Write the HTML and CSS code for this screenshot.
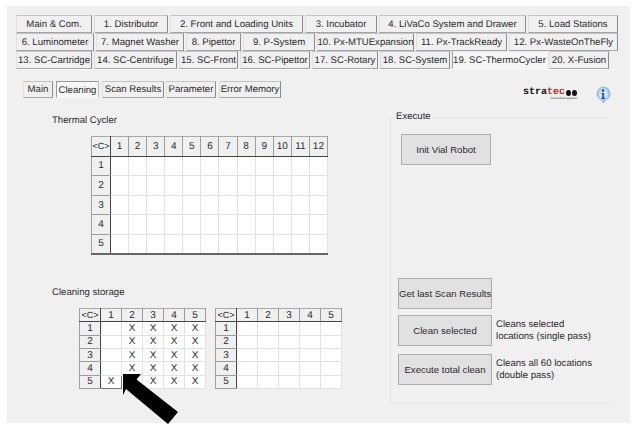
FILE: index.html
```html
<!DOCTYPE html>
<html lang="en">
<head>
<meta charset="utf-8">
<title>SC-ThermoCycler Cleaning</title>
<link rel="stylesheet" href="styles.css">
</head>
<body>
<main class="panel">
  <nav class="tabs">
    <div class="tab-row row-a">
      <span class="tab">Main &amp; Com.</span><span class="tab">1. Distributor</span><span class="tab">2. Front and Loading Units</span><span class="tab">3. Incubator</span><span class="tab">4. LiVaCo System and Drawer</span><span class="tab">5. Load Stations</span>
    </div>
    <div class="tab-row row-b">
      <span class="tab">6. Luminometer</span><span class="tab">7. Magnet Washer</span><span class="tab">8. Pipettor</span><span class="tab">9. P-System</span><span class="tab">10. Px-MTUExpansion</span><span class="tab">11. Px-TrackReady</span><span class="tab">12. Px-WasteOnTheFly</span>
    </div>
    <div class="tab-row row-c">
      <span class="tab">13. SC-Cartridge</span><span class="tab">14. SC-Centrifuge</span><span class="tab">15. SC-Front</span><span class="tab">16. SC-Pipettor</span><span class="tab">17. SC-Rotary</span><span class="tab">18. SC-System</span><span class="tab active">19. SC-ThermoCycler</span><span class="tab">20. X-Fusion</span>
    </div>
  </nav>

  <div class="subbar">
    <span class="subtab s-main">Main</span>
    <span class="subtab s-clean active">Cleaning</span>
    <span class="subtab s-scan">Scan Results</span>
    <span class="subtab s-param">Parameter</span>
    <span class="subtab s-err">Error Memory</span>
    <div class="logo">
      <div class="logo-word">stra<span class="logo-red">tec</span><i class="dot"></i><i class="dot"></i></div>
      <div class="logo-sub">biomedical systems</div>
    </div>
    <svg class="info" width="16" height="18" viewBox="0 0 16 18" aria-hidden="true">
      <defs>
        <radialGradient id="bub" cx="0.5" cy="0.45" r="0.6">
          <stop offset="0" stop-color="#ffffff"/>
          <stop offset="0.6" stop-color="#b9d6f5"/>
          <stop offset="1" stop-color="#4f8fd8"/>
        </radialGradient>
      </defs>
      <path d="M8 1a7 6.8 0 0 1 2.6 13.1L8.2 17l-.6-2.6A7 6.8 0 0 1 8 1z" fill="url(#bub)" stroke="#7fa9d8" stroke-width=".6"/>
      <circle cx="8" cy="4.6" r="1.3" fill="#1c50b0"/>
      <path d="M6.4 6.9h2.8v5h1v1.2H6.2v-1.2h1.1V8.1H6.4z" fill="#1c50b0"/>
    </svg>
  </div>

  <div class="content">
    <section class="left">
      <h2 class="caption first">Thermal Cycler</h2>
      <table class="grid big">
        <tr><th>&lt;C&gt;</th><th>1</th><th>2</th><th>3</th><th>4</th><th>5</th><th>6</th><th>7</th><th>8</th><th>9</th><th>10</th><th>11</th><th>12</th></tr>
        <tr><th>1</th><td></td><td></td><td></td><td></td><td></td><td></td><td></td><td></td><td></td><td></td><td></td><td></td></tr>
        <tr><th>2</th><td></td><td></td><td></td><td></td><td></td><td></td><td></td><td></td><td></td><td></td><td></td><td></td></tr>
        <tr><th>3</th><td></td><td></td><td></td><td></td><td></td><td></td><td></td><td></td><td></td><td></td><td></td><td></td></tr>
        <tr><th>4</th><td></td><td></td><td></td><td></td><td></td><td></td><td></td><td></td><td></td><td></td><td></td><td></td></tr>
        <tr><th>5</th><td></td><td></td><td></td><td></td><td></td><td></td><td></td><td></td><td></td><td></td><td></td><td></td></tr>
      </table>
      <h2 class="caption second">Cleaning storage</h2>
      <div class="pair">
        <table class="grid small">
          <tr><th>&lt;C&gt;</th><th>1</th><th>2</th><th>3</th><th>4</th><th>5</th></tr>
          <tr><th>1</th><td></td><td>X</td><td>X</td><td>X</td><td>X</td></tr>
          <tr><th>2</th><td></td><td>X</td><td>X</td><td>X</td><td>X</td></tr>
          <tr><th>3</th><td></td><td>X</td><td>X</td><td>X</td><td>X</td></tr>
          <tr><th>4</th><td></td><td>X</td><td>X</td><td>X</td><td>X</td></tr>
          <tr><th>5</th><td class="selected">X</td><td>X</td><td>X</td><td>X</td><td>X</td></tr>
        </table>
        <table class="grid small">
          <tr><th>&lt;C&gt;</th><th>1</th><th>2</th><th>3</th><th>4</th><th>5</th></tr>
          <tr><th>1</th><td></td><td></td><td></td><td></td><td></td></tr>
          <tr><th>2</th><td></td><td></td><td></td><td></td><td></td></tr>
          <tr><th>3</th><td></td><td></td><td></td><td></td><td></td></tr>
          <tr><th>4</th><td></td><td></td><td></td><td></td><td></td></tr>
          <tr><th>5</th><td></td><td></td><td></td><td></td><td></td></tr>
        </table>
      </div>
    </section>

    <fieldset class="group">
      <legend>Execute</legend>
      <button class="btn init" type="button">Init Vial Robot</button>
      <div class="actions">
        <div class="action"><button class="btn" type="button">Get last Scan Results</button></div>
        <div class="action"><button class="btn" type="button">Clean selected</button><p>Cleans selected locations (single pass)</p></div>
        <div class="action"><button class="btn" type="button">Execute total clean</button><p>Cleans all 60 locations (double pass)</p></div>
      </div>
    </fieldset>
  </div>
</main>
<svg class="arrow" width="60" height="52" viewBox="0 0 60 52" aria-hidden="true">
  <polygon points="0,0 18,0 13.5,5.5 55,38 45,50 3,15 0,21" fill="#000"/>
</svg>
</body>
</html>
```

FILE: styles.css
```css
* { box-sizing: border-box; }

html, body { margin: 0; padding: 0; background: #fff; }

body {
  position: relative;
  width: 639px;
  height: 432px;
  overflow: hidden;
  padding: 6px 9px 0 7px;
  font-family: "Liberation Sans", Arial, sans-serif;
  font-size: 9.6px;
  text-rendering: geometricPrecision;
  color: #2a2a2a;
}

.panel {
  height: 417px;
  padding: 9px 0 0 9px;
  background: #f0f0f0;
}

/* top tabs */
.tab-row {
  display: grid;
  height: 18px;
  column-gap: 2px;
  align-items: stretch;
}
.row-a { grid-template-columns: 76px 74px 133px 72px 147px 90px; }
.row-b { grid-template-columns: 78px 88px 55px 72px 97px 91px 109px; }
.row-c {
  grid-template-columns: 76px 83px 59px 70px 66px 70px 95px 60px;
  height: 19px;
  width: 605px;
  border-bottom: 1px solid #f8f8f8;
}

.tab, .subtab {
  display: flex;
  align-items: center;
  justify-content: center;
  white-space: nowrap;
  background: #f0f0f0;
  border: 1px solid;
  border-color: #c4c4c4 #8c8c8c #a4a4a4 #e0e0e0;
}
.tab.active {
  background: #f6f6f6;
  border-color: #e6e6e6 #f6f6f6 #f6f6f6 #9a9a9a;
}

/* sub tabs */
.subbar {
  display: flex;
  align-items: flex-start;
  height: 17px;
  margin: 11px 0 0 7px;
}
.subtab { height: 17px; }
.s-main { width: 30px; margin-right: 3px; }
.s-clean { width: 43px; margin-right: 3px; }
.s-scan { width: 62px; margin-right: 2px; }
.s-param { width: 50px; margin-right: 3px; }
.s-err { width: 62px; }
.subtab.active {
  background: #f8f8f8;
  border-color: #9a9a9a #bbb #f8f8f8 #9a9a9a;
  padding-top: 2px;
}

.logo {
  margin: 7px 0 0 242px;
  width: 54px;
  line-height: 1;
}
.logo-word {
  display: flex;
  align-items: center;
  font-family: "Liberation Mono", monospace;
  font-size: 10px;
  font-weight: bold;
  color: #111;
  height: 9px;
}
.logo-red { color: #e0222a; }
.dot {
  display: block;
  width: 6px;
  height: 6px;
  margin-left: 1px;
  border-radius: 50%;
  background: #111;
}
.logo-sub {
  font-size: 3px;
  text-align: right;
  color: #333;
  white-space: nowrap;
}
.info { margin: 5px 0 0 18px; flex: none; }

/* main area */
.content { display: flex; }
.left { width: 374px; padding-left: 36px; flex: none; }

.caption {
  margin: 0;
  font-size: inherit;
  font-weight: normal;
  line-height: 12px;
}
.first { margin-top: 17px; }
.second { margin-top: 32px; }

.grid {
  border-collapse: collapse;
  table-layout: fixed;
  background: #fff;
  text-align: center;
  border-top: 1px solid #a8a8a8;
  border-left: 1px solid #a0a0a0;
}
.grid th, .grid td { padding: 0; font-weight: normal; font-size: 10px; overflow: hidden; }
.grid th {
  background: #f0f0f0;
  border-right: 1px solid #9c9c9c;
  border-bottom: 1px solid #9c9c9c;
}
.grid tr:first-child th { border-bottom-color: #444; }
.grid tr th:first-child { border-right-color: #444; }
.grid tr:first-child th:first-child { font-size: 9px; }
.grid td {
  border-right: 1px solid #e2e2e2;
  border-bottom: 1px solid #e2e2e2;
}

.big { width: 237px; height: 119px; margin: 9px 0 0 39px; border-bottom: 2px solid #666; border-right: 1px solid #aaa; }
.big tr { height: 19px; }
.big th:first-child { width: 19px; }

.pair { display: flex; gap: 9px; margin: 9px 0 0 27px; }
.small { width: 127px; height: 81px; }
.small tr { height: 13px; }
.small th:first-child { width: 21px; }
.small td.selected { border: 1px solid #777; }

/* execute group */
.group {
  position: relative;
  width: 220px;
  height: 287px;
  margin: 19px 0 0 0;
  padding: 0;
  border: 1px solid #e4e4e4;
  border-right-color: #ececec;
}
.group legend {
  position: absolute;
  top: -7px;
  left: 4px;
  padding: 0 1px;
  background: #f0f0f0;
  line-height: 12px;
}

.btn {
  display: block;
  flex: none;
  width: 94px;
  height: 31px;
  padding: 0;
  background: #e1e1e1;
  border: 1px solid #adadad;
  font: inherit;
  color: inherit;
  white-space: nowrap;
}
.btn.init { width: 90px; margin: 16px 0 0 10px; }

.actions { display: flex; flex-direction: column; gap: 6px; margin: 113px 0 0 7px; }
.action { display: flex; align-items: center; gap: 4px; }
.action:last-child { margin-top: 2px; }
.action p { margin: 0; width: 98px; line-height: 12px; }

/* pointer drawn over the screenshot */
.arrow { position: absolute; left: 123px; top: 374px; }
```
